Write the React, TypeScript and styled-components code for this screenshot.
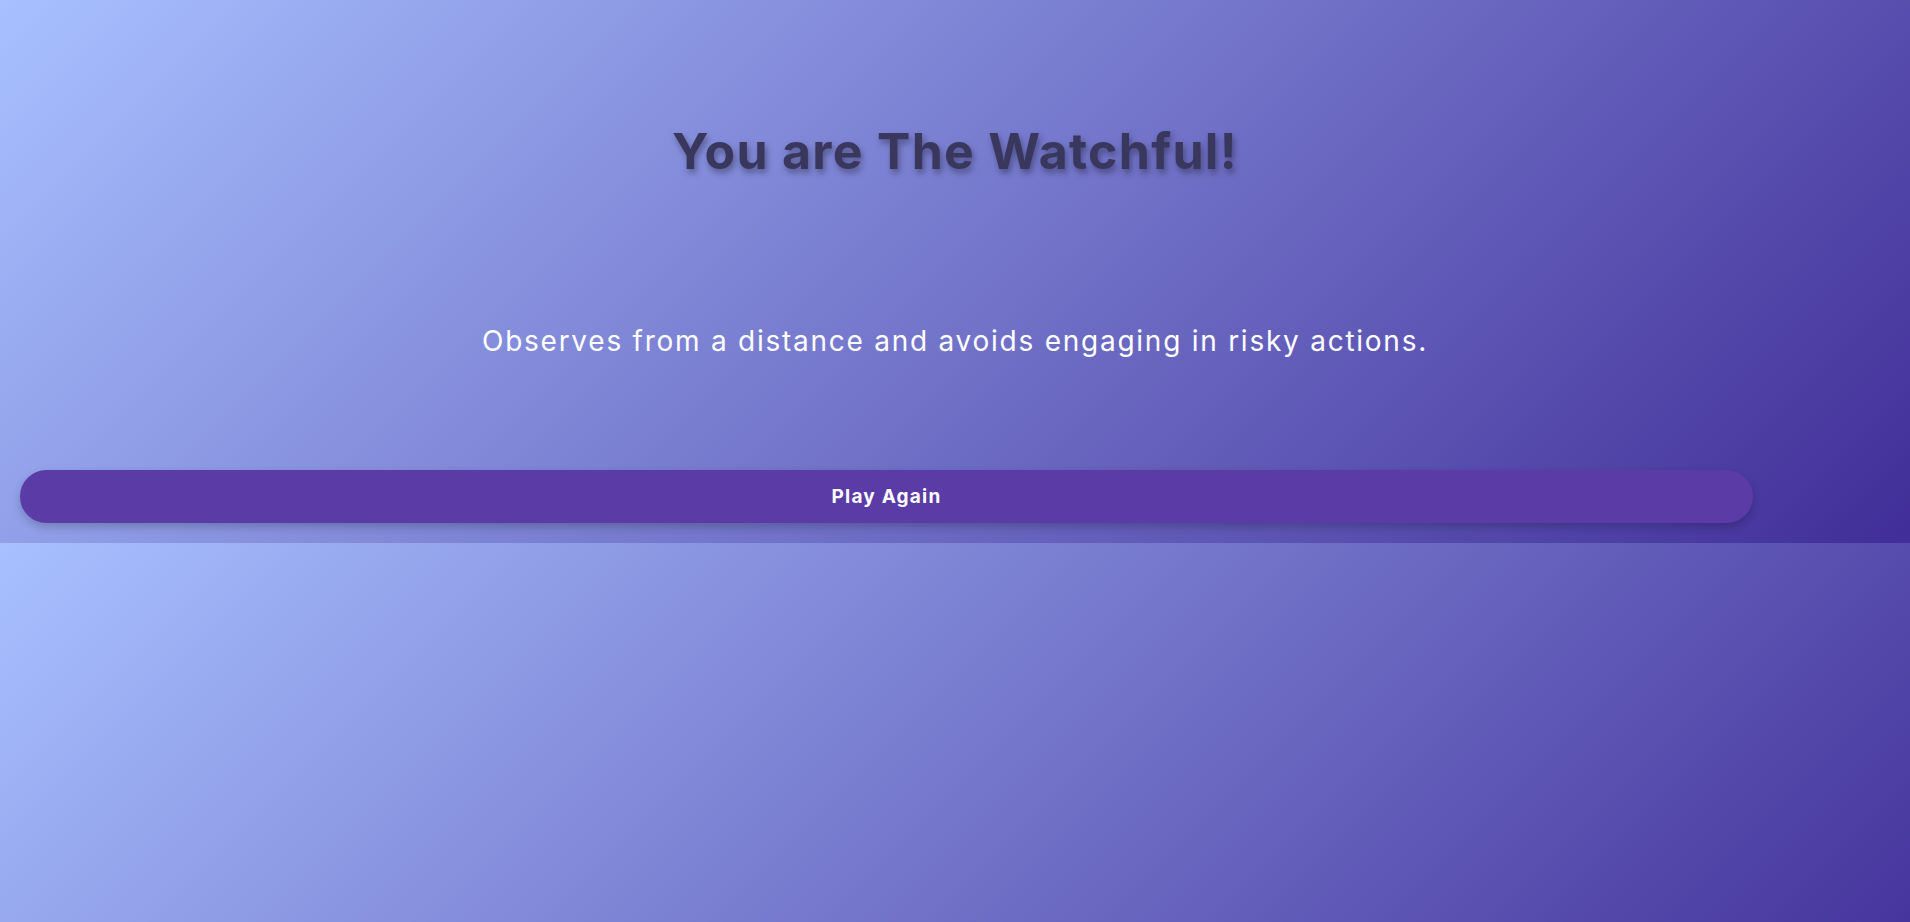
import React from 'react'
import styled, { createGlobalStyle } from 'styled-components'

const GlobalStyle = createGlobalStyle`
  html, body {
    margin: 0;
    padding: 0;
  }
  body {
    font-family: Inter, 'Noto Sans', sans-serif;
    background: linear-gradient(135deg, #a8c0ff, #3f2b96);
  }
`

const Screen = styled.div`
  width: 100%;
  padding: 20px 40px 20px 0;
  background: linear-gradient(135deg, #a8c0ff, #3f2b96);
  text-align: center;
`

const Title = styled.h1`
  margin: 101px 0 0;
  font-size: 50px;
  line-height: 60px;
  font-weight: 700;
  letter-spacing: 1.3px;
  color: #3a375f;
  text-shadow: 2px 4px 6px rgba(0, 0, 0, 0.35);
`

const Description = styled.p`
  margin: 141px 0 0;
  font-size: 28px;
  line-height: 39px;
  font-weight: 400;
  letter-spacing: 1.75px;
  color: #ffffff;
`

const PlayButton = styled.button`
  display: block;
  box-sizing: border-box;
  width: 1733px;
  height: 53px;
  margin: 109px 0 0 20px;
  border: none;
  border-radius: 27px;
  background: #5b3ba6;
  color: #ffffff;
  font-family: inherit;
  font-size: 19px;
  font-weight: 700;
  letter-spacing: 1.2px;
  box-shadow: 0 4px 8px rgba(0, 0, 0, 0.2);
  cursor: pointer;
`

const App = () => (
  <>
    <GlobalStyle />
    <Screen>
      <Title>You are The Watchful!</Title>
      <Description>Observes from a distance and avoids engaging in risky actions.</Description>
      <PlayButton>Play Again</PlayButton>
    </Screen>
  </>
)

export default App
